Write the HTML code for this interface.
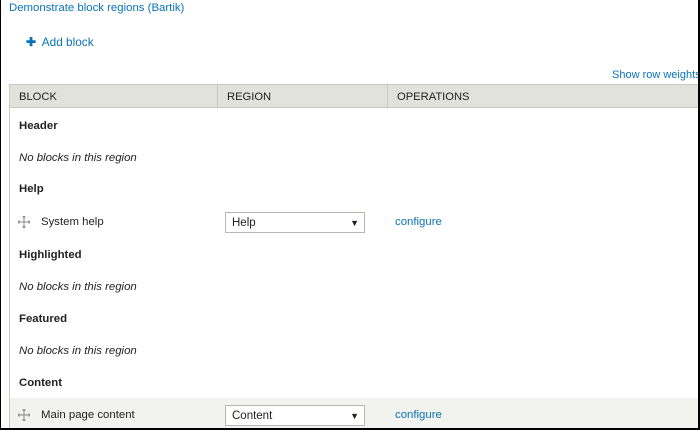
<!DOCTYPE html>
<html><head><style>
*{margin:0;padding:0;box-sizing:border-box}
body{width:700px;height:430px;overflow:hidden;background:#fff;font-family:"Liberation Sans",sans-serif;font-size:11.4px;color:#222;position:relative}
.frame{position:absolute;left:0;top:-2px;width:700px;height:432px;border:1px solid #000;border-right-width:2px;border-bottom-width:2px}
a{color:#0a73b8;text-decoration:none}
.abs{position:absolute;white-space:nowrap}
.thead{position:absolute;left:9px;top:84px;width:690px;height:24px;background:#e2e2dc;border:1px solid #c8c8c0;overflow:hidden}
.thead div{position:absolute;top:6px;font-size:11.2px;color:#222}
.thead .vl{position:absolute;top:0;width:1px;height:100%;background:#c8c8c0}
.tb{position:absolute;left:9px;top:108px;width:690px;height:322px;border-left:1px solid #c8c8c0}
.b{font-weight:bold}
.i{font-style:italic}
.sel{position:absolute;left:225px;width:140px;height:21px;border:1px solid #b8b8b0;background:#fff;font-size:11.5px;padding:4px 6px}
.sel:after{content:"\25BC";position:absolute;right:5px;top:5px;font-size:9px}
.drag{position:absolute;left:18px;width:12px;height:12px}
</style></head><body>
<div class="abs" style="left:9px;top:2px"><a>Demonstrate block regions (Bartik)</a></div>
<div class="abs" style="left:26px;top:35px;font-size:11.8px"><a><span style="font-weight:bold">✚</span>&nbsp; Add block</a></div>
<div class="abs" style="left:612px;top:69px;font-size:11px"><a>Show row weights</a></div>
<div class="thead">
<div style="left:9px">BLOCK</div>
<div class="vl" style="left:207px;top:0"></div>
<div style="left:217px">REGION</div>
<div class="vl" style="left:377px;top:0"></div>
<div style="left:387px">OPERATIONS</div>
</div>
<div class="tb"></div>
<div class="abs" style="left:10px;top:398px;width:689px;height:32px;background:#f2f2ee"></div>
<div class="abs b" style="left:19px;top:120px">Header</div>
<div class="abs i" style="left:19px;top:152px">No blocks in this region</div>
<div class="abs b" style="left:19px;top:183px">Help</div>
<svg class="drag" style="top:216px" viewBox="0 0 12 12"><path d="M6 0v12M0 6h12M4.5 1.5L6 0l1.5 1.5M4.5 10.5L6 12l1.5-1.5M1.5 4.5L0 6l1.5 1.5M10.5 4.5L12 6l-1.5 1.5" stroke="#888" fill="none"/></svg>
<div class="abs" style="left:41px;top:216px">System help</div>
<div class="sel" style="top:212px">Help</div>
<div class="abs" style="left:395px;top:216px"><a>configure</a></div>
<div class="abs b" style="left:19px;top:249px">Highlighted</div>
<div class="abs i" style="left:19px;top:281px">No blocks in this region</div>
<div class="abs b" style="left:19px;top:313px">Featured</div>
<div class="abs i" style="left:19px;top:345px">No blocks in this region</div>
<div class="abs b" style="left:19px;top:377px">Content</div>
<svg class="drag" style="top:409px" viewBox="0 0 12 12"><path d="M6 0v12M0 6h12M4.5 1.5L6 0l1.5 1.5M4.5 10.5L6 12l1.5-1.5M1.5 4.5L0 6l1.5 1.5M10.5 4.5L12 6l-1.5 1.5" stroke="#888" fill="none"/></svg>
<div class="abs" style="left:41px;top:409px">Main page content</div>
<div class="sel" style="top:405px">Content</div>
<div class="abs" style="left:395px;top:409px"><a>configure</a></div>
<div class="frame"></div>
</body></html>
